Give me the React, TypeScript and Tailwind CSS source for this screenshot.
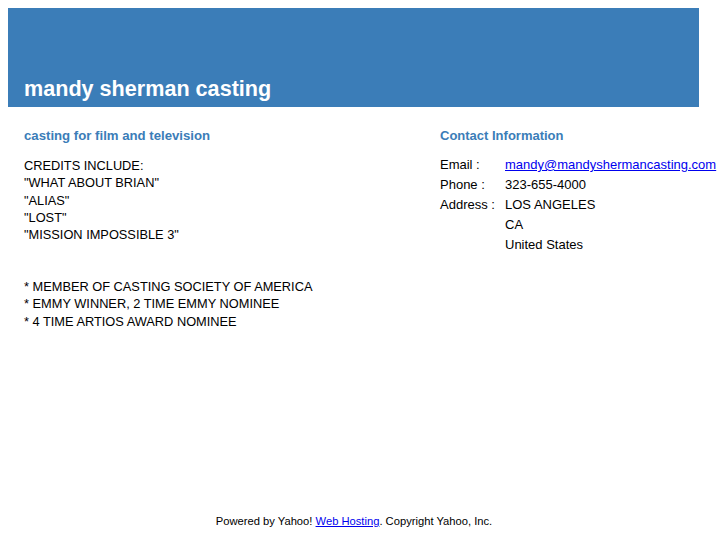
export default function App() {
  return (
    <div className="w-[727px] h-[545px] bg-white font-['Liberation_Sans',Arial,sans-serif] text-black relative">
      <div className="pt-2 pl-2">
        <div className="w-[691px] h-[99px] bg-[#3b7db8] flex items-end px-4 pb-[5px]">
          <h1 className="text-white font-bold text-[21.6px] leading-[26px]">mandy sherman casting</h1>
        </div>
      </div>
      <div className="flex pt-[21px] pl-6">
        <div className="w-[416px]">
          <h2 className="text-[#3b7db8] font-bold text-[13.2px] leading-[16px]">casting for film and television</h2>
          <div className="mt-[13px] text-[12.8px] leading-[17.3px]">
            <div>CREDITS INCLUDE:</div>
            <div>"WHAT ABOUT BRIAN"</div>
            <div>"ALIAS"</div>
            <div>"LOST"</div>
            <div>"MISSION IMPOSSIBLE 3"</div>
            <div className="h-[17.3px]"></div>
            <div className="h-[17.3px]"></div>
            <div>* MEMBER OF CASTING SOCIETY OF AMERICA</div>
            <div>* EMMY WINNER, 2 TIME EMMY NOMINEE</div>
            <div>* 4 TIME ARTIOS AWARD NOMINEE</div>
          </div>
        </div>
        <div>
          <h2 className="text-[#3b7db8] font-bold text-[13px] leading-[16px]">Contact Information</h2>
          <div className="mt-[11px] grid grid-cols-[65px_auto] text-[13px] leading-[20px]">
            <div>Email :</div>
            <div><a href="#" className="text-[#0000ee] underline">mandy@mandyshermancasting.com</a></div>
            <div>Phone :</div>
            <div>323-655-4000</div>
            <div>Address :</div>
            <div>LOS ANGELES</div>
            <div></div>
            <div>CA</div>
            <div></div>
            <div>United States</div>
          </div>
        </div>
      </div>
      <div className="absolute left-0 w-[708px] top-[514px] text-center text-[11.2px] leading-[14px]">
        Powered by Yahoo! <a href="#" className="text-[#0000ee] underline">Web Hosting</a>. Copyright Yahoo, Inc.
      </div>
    </div>
  );
}
